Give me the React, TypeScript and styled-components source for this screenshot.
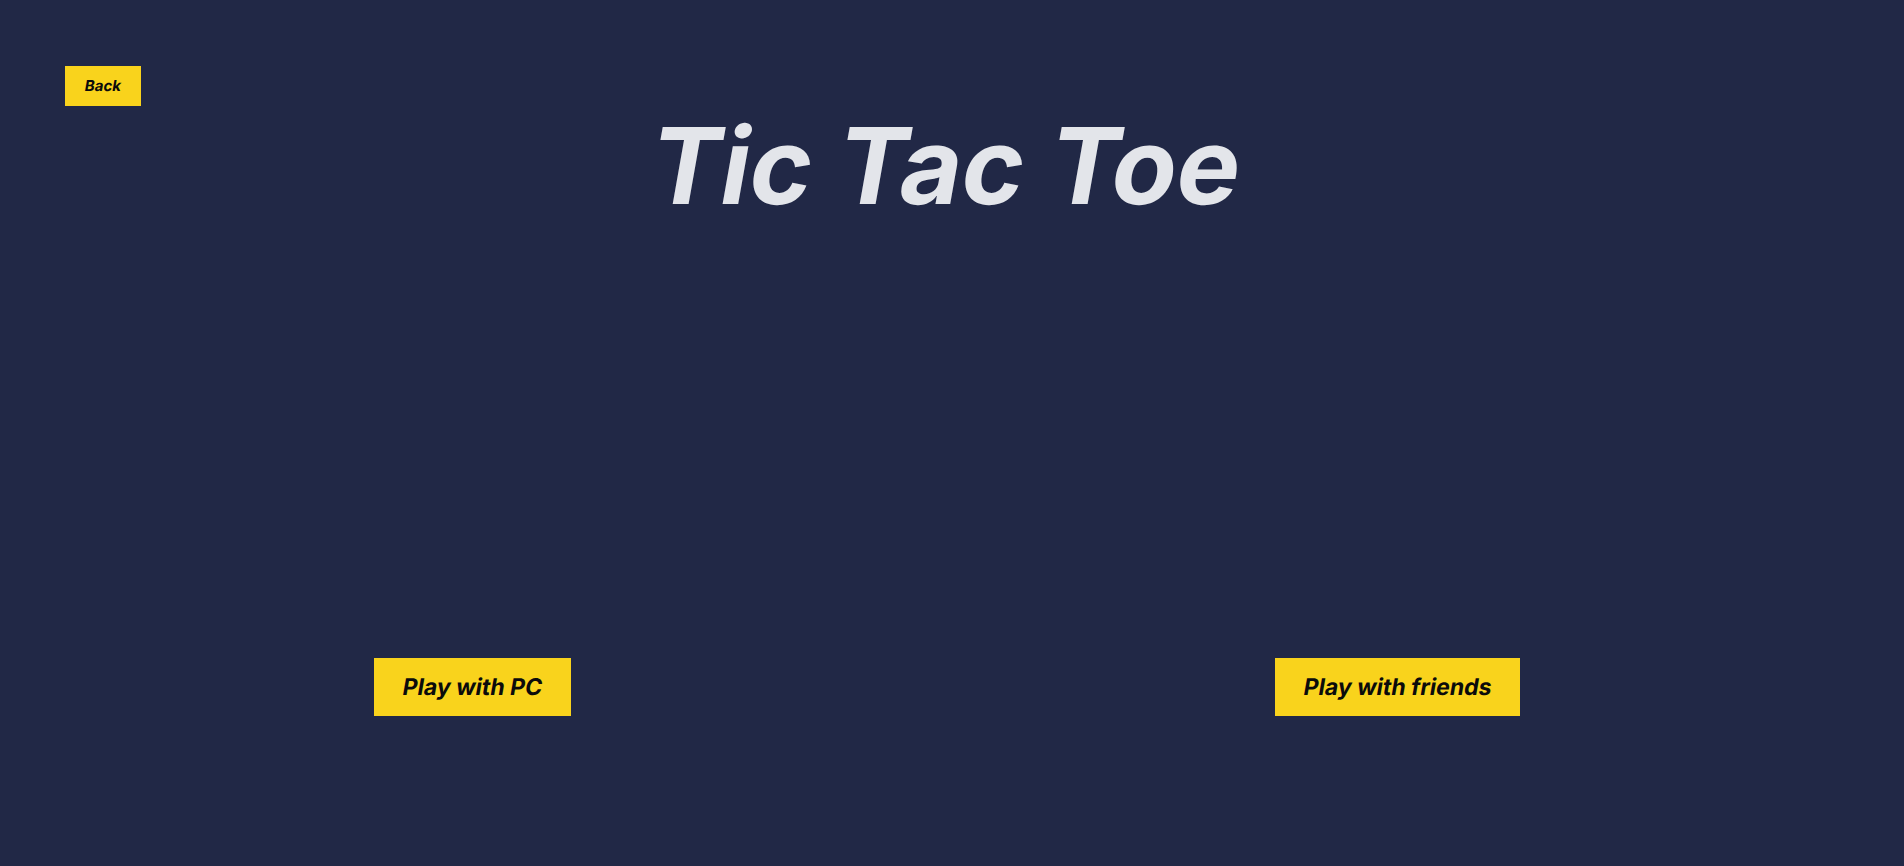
import React from "react";
import styled, { createGlobalStyle } from "styled-components";

const GlobalStyle = createGlobalStyle`
  html, body {
    margin: 0;
    padding: 0;
    background: #212846;
  }
  body {
    font-family: Inter, "Noto Sans", sans-serif;
  }
`;

const Page = styled.main`
  min-height: 866px;
  box-sizing: border-box;
  background: #212846;
  padding: 66px 32px 0 22px;
  display: flex;
  flex-direction: column;
`;

const TopBar = styled.div`
  padding-left: 43px;
  display: flex;
`;

const Slanted = styled.span`
  display: inline-block;
  transform: skewX(-10deg);
`;

const BackButton = styled.button`
  background: #f9d31c;
  color: #0b0b0b;
  border: none;
  font-family: Inter, sans-serif;
  font-weight: 700;
  font-size: 15px;
  line-height: 20px;
  padding: 10px 0;
  width: 76px;
  height: 40px;
  cursor: pointer;
`;

const Title = styled.h1`
  margin: 7px 0 0 0;
  text-align: center;
  font-family: Inter, sans-serif;
  font-weight: 700;
  font-size: 106px;
  line-height: 106px;
  color: #e3e5ea;
`;

const ButtonRow = styled.div`
  margin-top: 439px;
  display: flex;
  justify-content: space-around;
`;

const PlayButton = styled.button`
  background: #f9d31c;
  color: #0b0b0b;
  border: none;
  font-family: Inter, sans-serif;
  font-weight: 700;
  font-size: 23px;
  line-height: 32px;
  padding: 13px 29px;
  height: 58px;
  cursor: pointer;
`;

export default function App() {
  return (
    <>
      <GlobalStyle />
      <Page>
        <TopBar>
          <BackButton>
            <Slanted>Back</Slanted>
          </BackButton>
        </TopBar>
        <Title>
          <Slanted>Tic Tac Toe</Slanted>
        </Title>
        <ButtonRow>
          <PlayButton>
            <Slanted>Play with PC</Slanted>
          </PlayButton>
          <PlayButton>
            <Slanted>Play with friends</Slanted>
          </PlayButton>
        </ButtonRow>
      </Page>
    </>
  );
}
